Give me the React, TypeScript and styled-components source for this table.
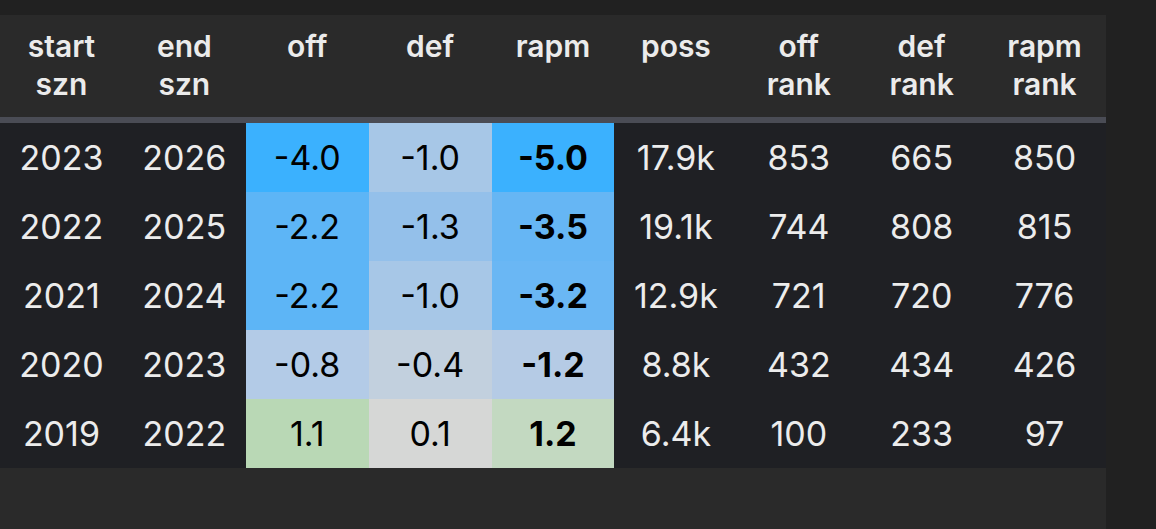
import React from "react";
import styled, { createGlobalStyle } from "styled-components";

const Global = createGlobalStyle`
  html, body { margin: 0; padding: 0; background: #212121; }
  body { font-family: Inter, "Noto Sans", "Liberation Sans", sans-serif; }
`;

const Page = styled.div`
  width: 1156px;
  height: 529px;
  padding-top: 15px;
  box-sizing: border-box;
  background: #212121;
  overflow: hidden;
`;

const Panel = styled.div`
  width: 1106px;
  height: 514px;
  background: #2a2a2a;
`;

const Grid = styled.div`
  display: grid;
  grid-template-columns: repeat(9, 1fr);
`;

const HeadRow = styled(Grid)`
  height: 102px;
  border-bottom: 6px solid #4a4c55;
  background: #2a2a2a;
`;

const HeadCell = styled.div`
  padding-top: 12px;
  text-align: center;
  color: #ebebeb;
  font-size: 30px;
  font-weight: 600;
  line-height: 38px;
  white-space: pre-line;
`;

const Body = styled.div`
  background: #1f2024;
`;

const Row = styled(Grid)`
  height: 69px;
`;

const Cell = styled.div<{ $bg?: string; $bold?: boolean }>`
  display: flex;
  align-items: center;
  justify-content: center;
  font-size: 34px;
  font-weight: ${(p) => (p.$bold ? 700 : 400)};
  color: ${(p) => (p.$bg ? "#000" : "#ececec")};
  background: ${(p) => p.$bg ?? "transparent"};
`;

const headers = [
  "start\nszn",
  "end\nszn",
  "off",
  "def",
  "rapm",
  "poss",
  "off\nrank",
  "def\nrank",
  "rapm\nrank",
];

type R = {
  s: string;
  e: string;
  off: [string, string];
  def: [string, string];
  rapm: [string, string];
  poss: string;
  or: string;
  dr: string;
  rr: string;
};

const rows: R[] = [
  { s: "2023", e: "2026", off: ["-4.0", "#3bb1fe"], def: ["-1.0", "#a7c7e7"], rapm: ["-5.0", "#3bb1fe"], poss: "17.9k", or: "853", dr: "665", rr: "850" },
  { s: "2022", e: "2025", off: ["-2.2", "#5db5f6"], def: ["-1.3", "#94c0ea"], rapm: ["-3.5", "#66b6f4"], poss: "19.1k", or: "744", dr: "808", rr: "815" },
  { s: "2021", e: "2024", off: ["-2.2", "#5db5f6"], def: ["-1.0", "#a7c7e7"], rapm: ["-3.2", "#6ab7f4"], poss: "12.9k", or: "721", dr: "720", rr: "776" },
  { s: "2020", e: "2023", off: ["-0.8", "#b3cbe7"], def: ["-0.4", "#c2d0de"], rapm: ["-1.2", "#b5cbe5"], poss: "8.8k", or: "432", dr: "434", rr: "426" },
  { s: "2019", e: "2022", off: ["1.1", "#b9d8b5"], def: ["0.1", "#d6d7d6"], rapm: ["1.2", "#c3d9c1"], poss: "6.4k", or: "100", dr: "233", rr: "97" },
];

export default function App() {
  return (
    <>
      <Global />
      <Page>
        <Panel>
          <HeadRow>
            {headers.map((h) => (
              <HeadCell key={h}>{h}</HeadCell>
            ))}
          </HeadRow>
          <Body>
            {rows.map((r) => (
              <Row key={r.s}>
                <Cell>{r.s}</Cell>
                <Cell>{r.e}</Cell>
                <Cell $bg={r.off[1]}>{r.off[0]}</Cell>
                <Cell $bg={r.def[1]}>{r.def[0]}</Cell>
                <Cell $bg={r.rapm[1]} $bold>{r.rapm[0]}</Cell>
                <Cell>{r.poss}</Cell>
                <Cell>{r.or}</Cell>
                <Cell>{r.dr}</Cell>
                <Cell>{r.rr}</Cell>
              </Row>
            ))}
          </Body>
        </Panel>
      </Page>
    </>
  );
}
